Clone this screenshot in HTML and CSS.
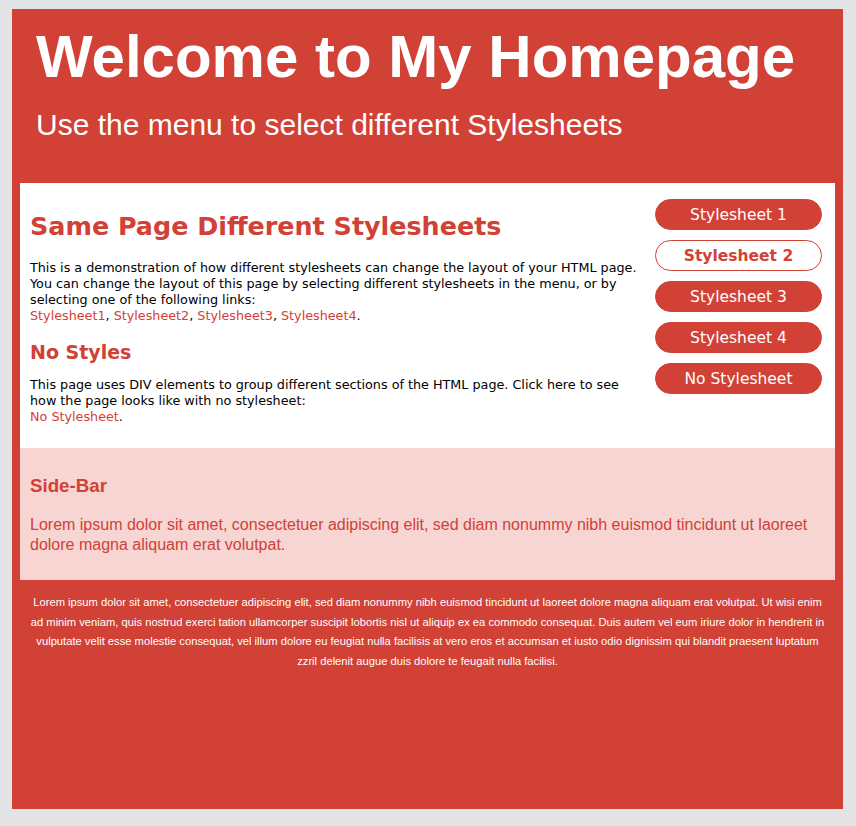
FILE: index.html
```html
<!DOCTYPE html>
<html>
<head>
<meta charset="utf-8">
<title>My Homepage</title>
<link rel="stylesheet" href="styles.css">
</head>
<body>
<div class="page">
  <div class="header">
    <h1 class="title">Welcome to My Homepage</h1>
    <h2 class="subtitle">Use the menu to select different Stylesheets</h2>
  </div>
  <div class="main">
    <div class="content">
      <h2 class="heading">Same Page Different Stylesheets</h2>
      <p class="text">This is a demonstration of how different stylesheets can change the layout of your HTML page. You can change the layout of this page by selecting different stylesheets in the menu, or by selecting one of the following links:<br><a href="#">Stylesheet1</a>, <a href="#">Stylesheet2</a>, <a href="#">Stylesheet3</a>, <a href="#">Stylesheet4</a>.</p>
      <h3 class="heading small">No Styles</h3>
      <p class="text">This page uses DIV elements to group different sections of the HTML page. Click here to see how the page looks like with no stylesheet:<br><a href="#">No Stylesheet</a>.</p>
    </div>
    <div class="menu">
      <a class="btn" href="#">Stylesheet 1</a>
      <a class="btn active" href="#">Stylesheet 2</a>
      <a class="btn" href="#">Stylesheet 3</a>
      <a class="btn" href="#">Stylesheet 4</a>
      <a class="btn" href="#">No Stylesheet</a>
    </div>
  </div>
  <div class="sidebar">
    <h3 class="side-title">Side-Bar</h3>
    <p class="side-text">Lorem ipsum dolor sit amet, consectetuer adipiscing elit, sed diam nonummy nibh euismod tincidunt ut laoreet dolore magna aliquam erat volutpat.</p>
  </div>
  <div class="footer">
    <p class="foot-text">Lorem ipsum dolor sit amet, consectetuer adipiscing elit, sed diam nonummy nibh euismod tincidunt ut laoreet dolore magna aliquam erat volutpat. Ut wisi enim ad minim veniam, quis nostrud exerci tation ullamcorper suscipit lobortis nisl ut aliquip ex ea commodo consequat. Duis autem vel eum iriure dolor in hendrerit in vulputate velit esse molestie consequat, vel illum dolore eu feugiat nulla facilisis at vero eros et accumsan et iusto odio dignissim qui blandit praesent luptatum zzril delenit augue duis dolore te feugait nulla facilisi.</p>
  </div>
</div>
</body>
</html>
```
FILE: styles.css
```css
html, body {
  margin: 0;
  padding: 0;
}
body {
  background: #e3e4e5;
  padding: 9px 13px 17px 12px;
  font-family: "Liberation Sans", Arial, sans-serif;
}
.page {
  background: #d14136;
  height: 800px;
  display: flex;
  flex-direction: column;
}
.header {
  height: 174px;
  padding: 0 24px;
  color: #fff;
  box-sizing: border-box;
}
.title {
  margin: 0;
  padding-top: 13px;
  font-size: 60px;
  line-height: 70px;
  font-weight: bold;
}
.subtitle {
  margin: 0;
  padding-top: 16px;
  font-size: 30px;
  line-height: 34px;
  font-weight: normal;
}
.main {
  background: #fff;
  margin: 0 8px;
  height: 265px;
  display: flex;
  padding: 16px 13px 0 10px;
  box-sizing: border-box;
  gap: 14px;
}
.content {
  flex: 1;
  font-family: "DejaVu Sans", Verdana, sans-serif;
}
.heading {
  color: #d14136;
  font-size: 25.4px;
  font-weight: bold;
  margin: 12px 0 19px;
  line-height: 30px;
}
.heading.small {
  font-size: 19px;
  margin: 16px 0 13px;
  line-height: 24px;
}
.text {
  margin: 0;
  font-size: 12.75px;
  line-height: 16px;
  color: #000;
}
.text a {
  color: #d14136;
  text-decoration: none;
}
.menu {
  width: 167px;
  display: flex;
  flex-direction: column;
  gap: 10px;
}
.btn {
  display: block;
  height: 31px;
  line-height: 31px;
  box-sizing: border-box;
  border: 1px solid #d14136;
  border-radius: 16px;
  background: #d14136;
  color: #fff;
  text-align: center;
  text-decoration: none;
  font-family: "DejaVu Sans", Verdana, sans-serif;
  font-size: 15.5px;
  overflow: hidden;
}
.btn.active {
  background: #fff;
  color: #d14136;
  font-weight: bold;
}
.sidebar {
  background: #f6d5d3;
  margin: 0 8px;
  height: 132px;
  padding: 27px 10px 0;
  box-sizing: border-box;
  color: #d14136;
}
.side-title {
  margin: 0 0 18px;
  font-size: 18.72px;
  line-height: 22px;
}
.side-text {
  margin: 0;
  font-size: 16px;
  line-height: 20px;
}
.footer {
  flex: 1;
  padding: 13px 16px 0;
  color: #fff;
}
.foot-text {
  margin: 0;
  font-size: 11.2px;
  line-height: 19.5px;
  text-align: center;
}
```
